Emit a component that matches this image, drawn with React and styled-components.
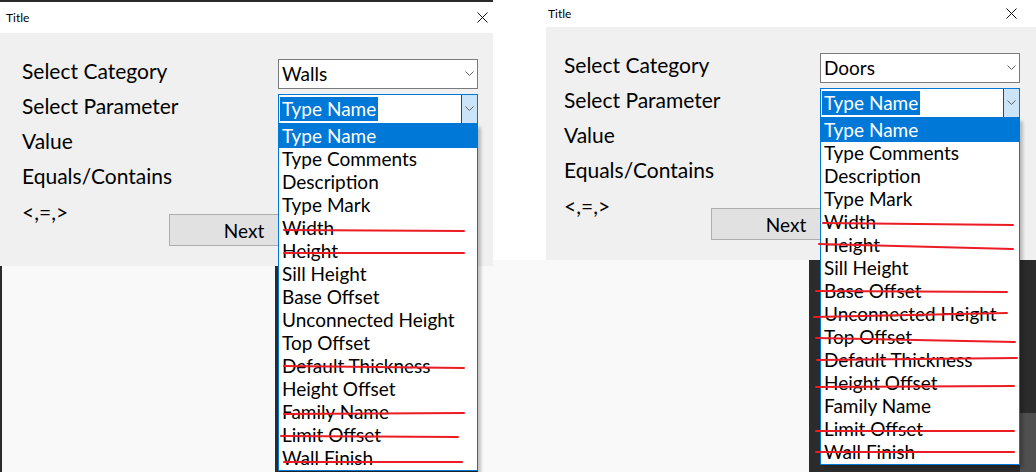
import React from "react";
import styled, { createGlobalStyle } from "styled-components";

const GlobalStyle = createGlobalStyle`
  html, body {
    margin: 0;
    padding: 0;
  }

  body {
    width: 1036px;
    height: 472px;
    overflow: hidden;
    background: #f9f9f9;
    font-family: Lato, "Noto Sans", sans-serif;
    color: #000;
  }
`;

const PARAMS = [
  "Type Name",
  "Type Comments",
  "Description",
  "Type Mark",
  "Width",
  "Height",
  "Sill Height",
  "Base Offset",
  "Unconnected Height",
  "Top Offset",
  "Default Thickness",
  "Height Offset",
  "Family Name",
  "Limit Offset",
  "Wall Finish",
];

// red strike-through marks, in list coordinates
const LEFT_MARKS = [
  [5, 105, 185, 106],
  [5, 128, 185, 128],
  [5, 241, 185, 243],
  [5, 289, 185, 288],
  [2, 311, 179, 312],
  [5, 337, 183, 337],
];

const RIGHT_MARKS = [
  [2, 104, 192, 106],
  [-2, 125, 192, 130],
  [-5, 172, 186, 173],
  [-7, 198, 186, 194],
  [-5, 219, 194, 223],
  [-4, 241, 196, 239],
  [-5, 268, 193, 267],
  [-5, 312, 193, 312],
  [-5, 333, 193, 333],
];

const Page = styled.div`
  display: flex;
  width: 1036px;
  height: 472px;
`;

const Shot = styled.section`
  display: flex;
  flex-direction: column;
  width: ${(p) => p.$width}px;
  height: 472px;
  background: #fff;
`;

const TopStrip = styled.div`
  height: 2px;
  background: #2b2b2b;
`;

const TitleBar = styled.header`
  display: flex;
  align-items: center;
  justify-content: space-between;
  height: ${(p) => p.$height}px;
  padding: 0 ${(p) => p.$right}px 0 ${(p) => p.$left}px;
  background: #fff;
  font-size: 12px;
`;

const CloseIcon = styled.svg`
  width: 11px;
  height: 11px;
  stroke: #111;
  stroke-width: 1;
`;

const MainRow = styled.div`
  display: flex;
  height: 233px;
`;

const Gutter = styled.div`
  width: 53px;
  background: #fff;
`;

const Body = styled.div`
  flex: 1;
  position: relative;
  background: #f0f0f0;
  padding: 23px 0 0 ${(p) => p.$inset}px;
`;

const Form = styled.div`
  display: grid;
  grid-template-columns: 256px 200px;
  grid-auto-rows: 35px;
  align-items: center;
`;

const Label = styled.div`
  font-size: 21px;
  line-height: 35px;
  margin-top: -6px;
  width: ${(p) => (p.$width ? `${p.$width}px` : "auto")};
`;

const Combo = styled.div`
  position: relative;
  display: flex;
  align-items: center;
  height: 30px;
  box-sizing: border-box;
  border: 1px solid ${(p) => (p.$focused ? "#0078d7" : "#7a7a7a")};
  background: #fff;
  font-size: 19px;
  padding-left: ${(p) => (p.$focused ? 1 : 3)}px;
`;

const ComboText = styled.span`
  flex: 1;
  line-height: 24px;
`;

const Selected = styled.span`
  display: inline-block;
  height: 24px;
  line-height: 23px;
  padding: 0 2px;
  background: #0078d7;
  color: #fff;
`;

const DropButton = styled.div`
  display: flex;
  align-items: center;
  justify-content: center;
  width: 16px;
  height: 100%;
  box-sizing: border-box;
  background: ${(p) => (p.$active ? "#cce4f7" : "transparent")};
  border-left: 1px solid ${(p) => (p.$active ? "#005499" : "transparent")};
`;

const Chevron = styled.svg`
  width: 9px;
  height: 5px;
  fill: none;
  stroke: #606060;
  stroke-width: 1;
`;

const List = styled.ul`
  position: absolute;
  z-index: 5;
  top: calc(100% + 1px);
  left: -1px;
  width: 200px;
  box-sizing: border-box;
  margin: 0;
  padding: 0;
  list-style: none;
  background: #fff;
  border: 1px solid #0078d7;
  box-shadow: 3px 3px 3px rgba(0, 0, 0, 0.22);
`;

const Option = styled.li`
  height: 23px;
  line-height: 22px;
  padding-left: 3px;
  font-size: 19px;
  white-space: nowrap;
  background: ${(p) => (p.$active ? "#0078d7" : "transparent")};
  color: ${(p) => (p.$active ? "#fff" : "#000")};
`;

const Marks = styled.svg`
  position: absolute;
  top: 0;
  left: 0;
  width: 200px;
  height: 350px;
  overflow: visible;
  pointer-events: none;
  stroke: #ec1c24;
  stroke-width: 2;
  stroke-linecap: round;
`;

const ActionRow = styled.div`
  grid-column: 1 / -1;
  display: flex;
  align-items: flex-start;
  align-self: start;
  margin-top: 4px;
`;

const NextButton = styled.button`
  width: 150px;
  height: 32px;
  margin-top: 14px;
  padding: 0;
  border: 1px solid #adadad;
  background: #e1e1e1;
  font-family: inherit;
  font-size: 19px;
  color: #000;
`;

const Backdrop = styled.div`
  flex: 1;
  display: flex;
`;

const Pane = styled.div`
  width: ${(p) => (p.$width ? `${p.$width}px` : "auto")};
  flex: ${(p) => (p.$width ? "none" : 1)};
  background: ${(p) => (p.$dark ? "#2b2b2b" : "#f9f9f9")};
  display: flex;
  justify-content: flex-end;
  align-items: flex-end;
`;

const Corner = styled.div`
  width: 16px;
  height: 59px;
  background: #4f4f4f;
`;

const Close = () => (
  <CloseIcon viewBox="0 0 11 11">
    <path d="M0.5 0.5 L10.5 10.5 M10.5 0.5 L0.5 10.5" />
  </CloseIcon>
);

const Arrow = () => (
  <Chevron viewBox="0 0 9 5">
    <polyline points="0.5,0.5 4.5,4.5 8.5,0.5" />
  </Chevron>
);

const ParamList = ({ marks }) => (
  <List>
    {PARAMS.map((name, i) => (
      <Option key={name} $active={i === 0}>
        {name}
      </Option>
    ))}
    <Marks viewBox="0 0 200 350">
      {marks.map(([x1, y1, x2, y2], i) => (
        <line key={i} x1={x1} y1={y1} x2={x2} y2={y2} />
      ))}
    </Marks>
  </List>
);

const Dialog = ({ category, inset, marks }) => (
  <Body $inset={inset}>
    <Form>
      <Label>Select Category</Label>
      <Combo>
        <ComboText>{category}</ComboText>
        <DropButton>
          <Arrow />
        </DropButton>
      </Combo>
      <Label>Select Parameter</Label>
      <Combo $focused>
        <ComboText>
          <Selected>Type Name</Selected>
        </ComboText>
        <DropButton $active>
          <Arrow />
        </DropButton>
        <ParamList marks={marks} />
      </Combo>
      <Label>Value</Label>
      <div />
      <Label>Equals/Contains</Label>
      <div />
      <ActionRow>
        <Label $width={147}>&lt;,=,&gt;</Label>
        <NextButton>Next</NextButton>
      </ActionRow>
    </Form>
  </Body>
);

export default function App() {
  return (
    <>
      <GlobalStyle />
      <Page>
        <Shot $width={493}>
          <TopStrip />
          <TitleBar $height={31} $left={6} $right={5}>
            <span>Title</span>
            <Close />
          </TitleBar>
          <MainRow>
            <Dialog category="Walls" inset={22} marks={LEFT_MARKS} />
          </MainRow>
          <Backdrop>
            <Pane $width={2} $dark />
            <Pane $width={273} />
            <Pane $width={203} $dark />
            <Pane />
          </Backdrop>
        </Shot>
        <Shot $width={543}>
          <TitleBar $height={27} $left={55} $right={19}>
            <span>Title</span>
            <Close />
          </TitleBar>
          <MainRow>
            <Gutter />
            <Dialog category="Doors" inset={18} marks={RIGHT_MARKS} />
          </MainRow>
          <Backdrop>
            <Pane $width={316} />
            <Pane $dark>
              <Corner />
            </Pane>
          </Backdrop>
        </Shot>
      </Page>
    </>
  );
}
